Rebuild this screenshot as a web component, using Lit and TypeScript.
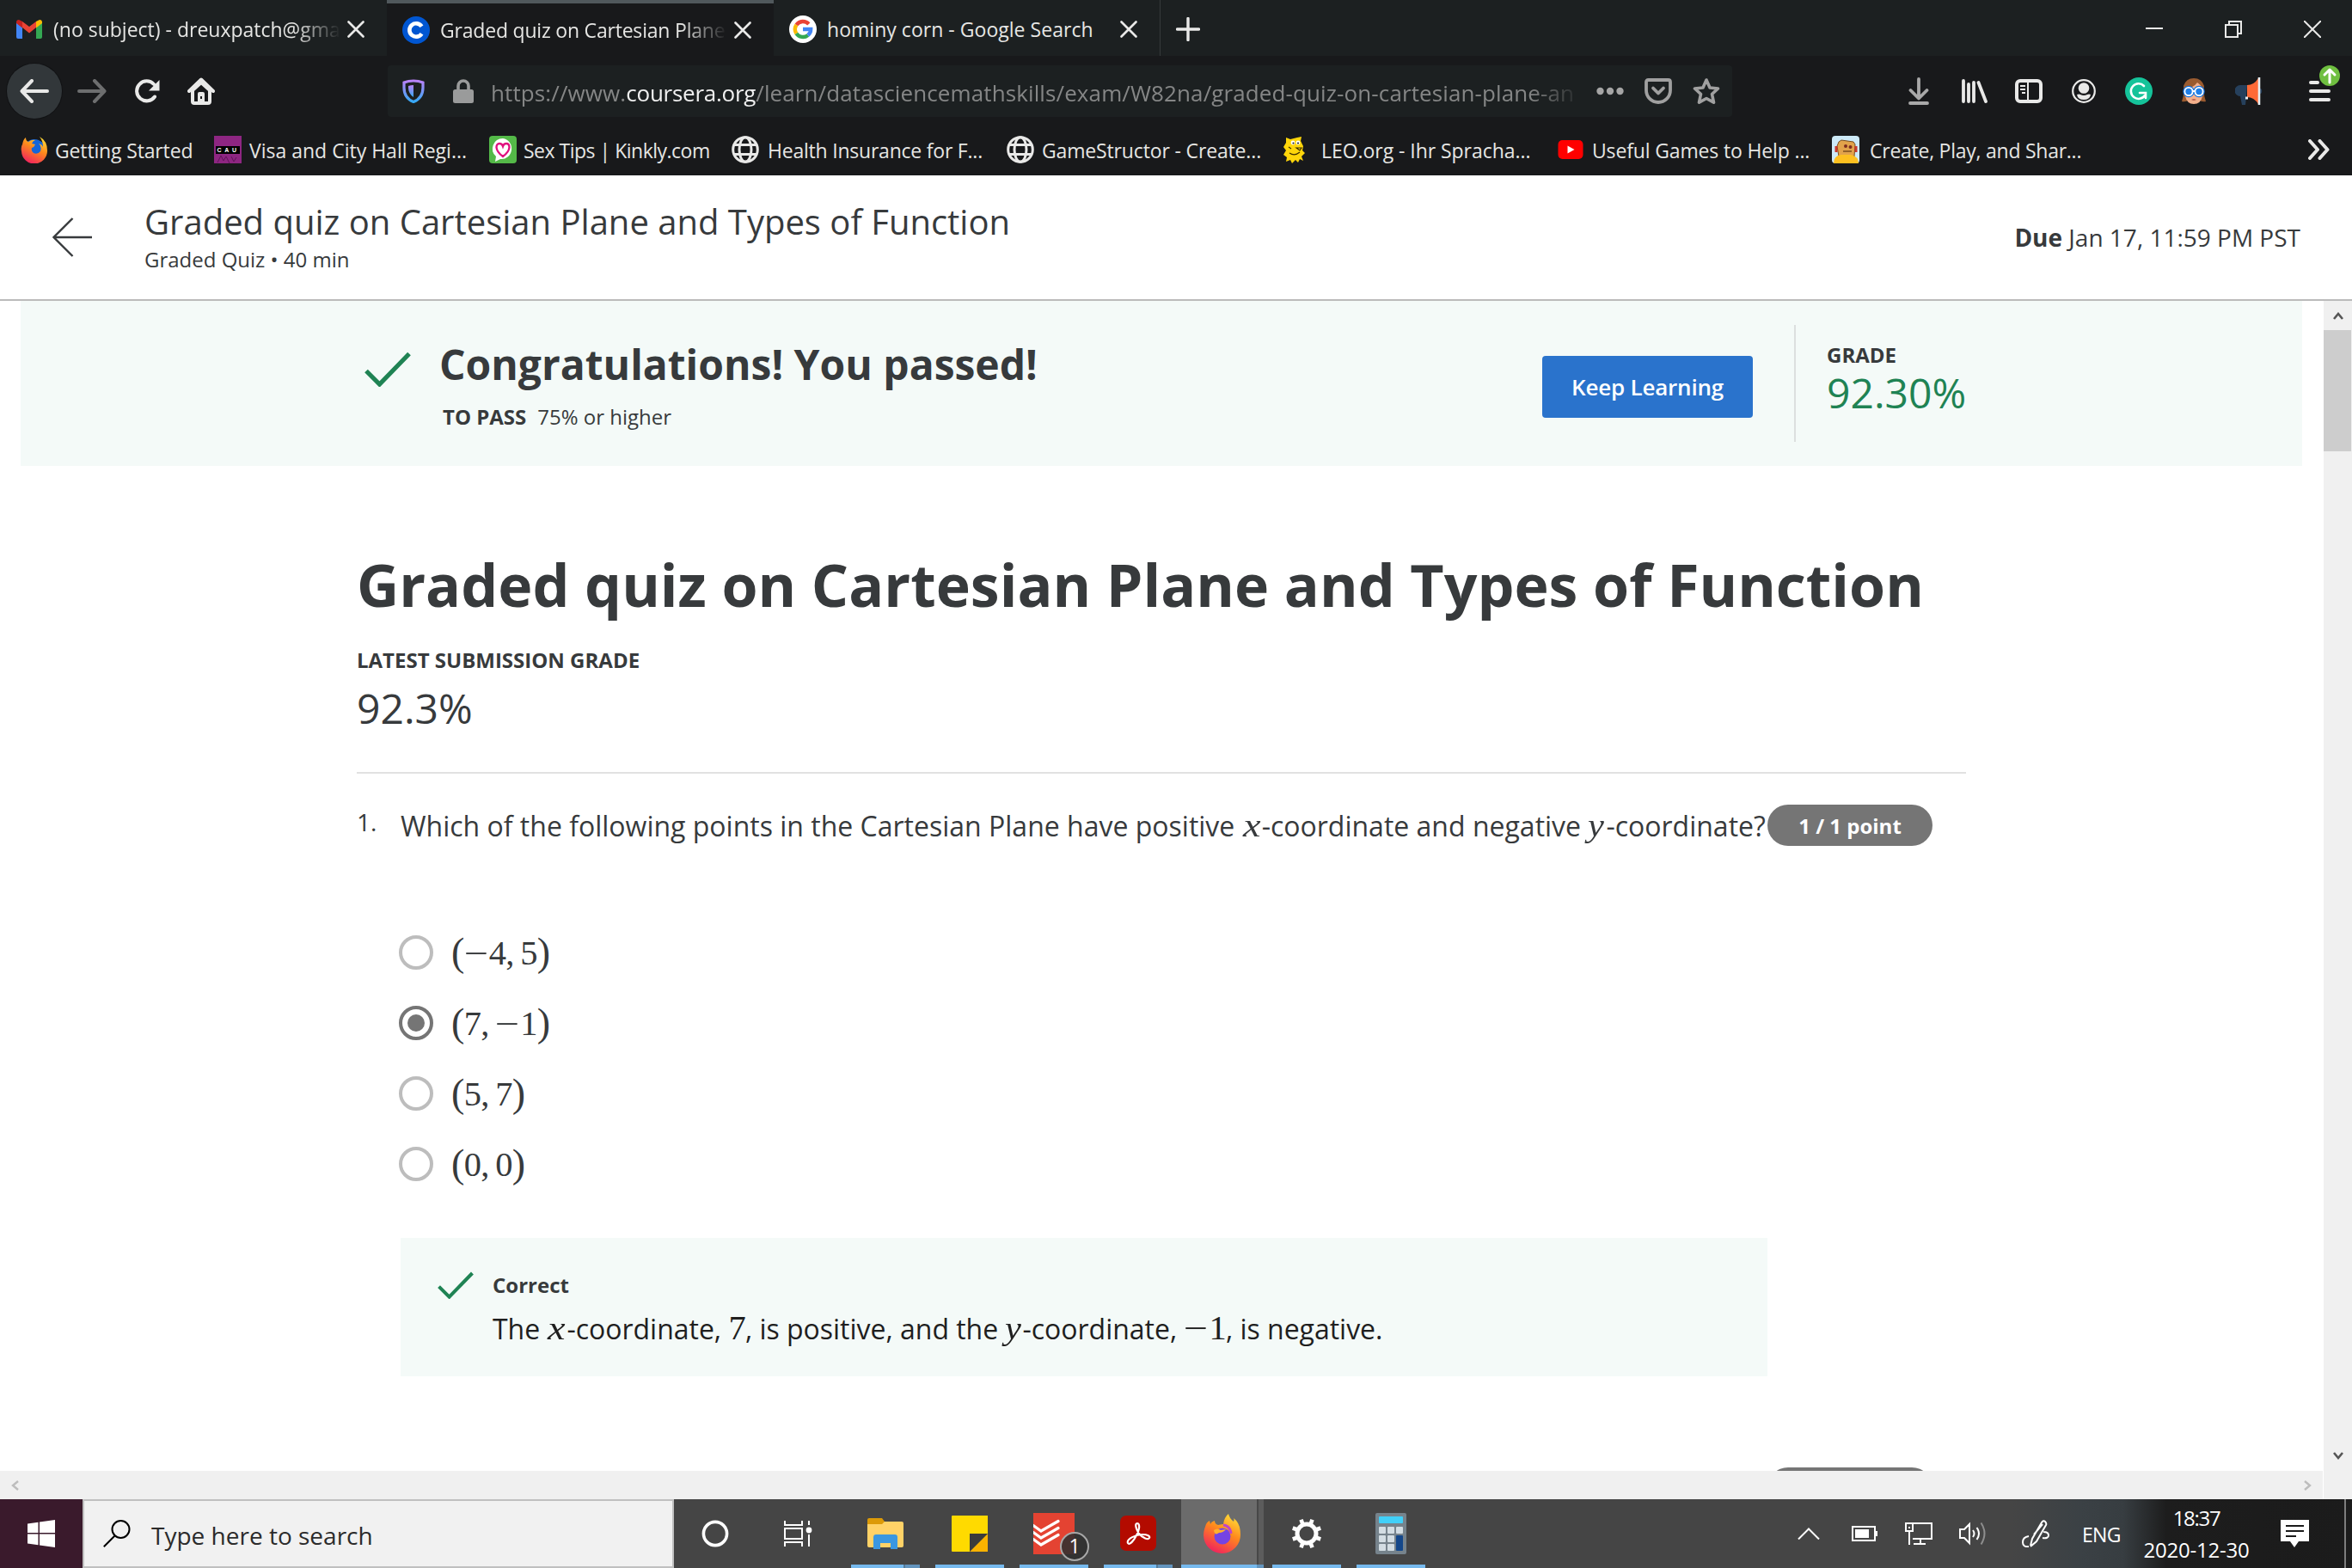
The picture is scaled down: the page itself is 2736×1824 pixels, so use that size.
import { LitElement, html, css, svg } from "lit";
import { customElement } from "lit/decorators.js";
import { classMap } from "lit/directives/class-map.js";

const icon = (w: number, h: number, body: unknown) =>
  html`<svg class="icon" width=${w} height=${h} viewBox="0 0 ${w} ${h}" fill="none">${body}</svg>`;

const LIGHT = "#e9e9e8";

/* ---------- browser chrome icons ---------- */
const gmail = icon(30, 22, svg`
  <path d="M0 3v17q0 2 2 2h5V9z" fill="#4285f4"/><path d="M30 3v17q0 2-2 2h-5V9z" fill="#34a853"/>
  <path d="M7 9V2l8 6 8-6v7l-8 6.500z" fill="#ea4335"/><path d="M0 3q0-3 3-3l4 2v7.500L0 4z" fill="#c5221f"/>
  <path d="M30 3q0-3-3-3l-4 2v7.500L30 4z" fill="#fbbc04"/>`);
const coursera = icon(32, 32, svg`<circle cx="16" cy="16" r="16" fill="#0056d2"/>
  <path d="M22.500 11.800A7.700 7.700 0 1 0 22.500 20.200" stroke="#fff" stroke-width="4.600"/>`);
const googleG = icon(32, 32, svg`<circle cx="16" cy="16" r="16" fill="#fff"/><g stroke-width="4.400">
  <path d="M22.800 10A9.200 9.200 0 0 0 8.400 11" stroke="#ea4335"/><path d="M8.400 11A9.200 9.200 0 0 0 8.400 21" stroke="#fbbc05"/>
  <path d="M8.400 21A9.200 9.200 0 0 0 21.800 23" stroke="#34a853"/><path d="M21.800 23A9.200 9.200 0 0 0 25.200 16H16" stroke="#4285f4"/></g>`);
const tabClose = icon(20, 20, svg`<path d="M1.500 1.500l17 17M18.500 1.500l-17 17" stroke=${LIGHT} stroke-width="2.600" stroke-linecap="round"/>`);
const plus = icon(28, 28, svg`<path d="M14 1.500v25M1.500 14h25" stroke=${LIGHT} stroke-width="3.400" stroke-linecap="round"/>`);
const winMin = icon(20, 20, svg`<path d="M0 9h20" stroke=${LIGHT} stroke-width="2"/>`);
const winRestore = icon(20, 20, svg`<path d="M1 5h14v14H1zM5 5V1h14v14h-4" stroke=${LIGHT} stroke-width="2"/>`);
const winClose = icon(20, 20, svg`<path d="M0 0l20 20M20 0L0 20" stroke=${LIGHT} stroke-width="2"/>`);
const back = icon(34, 28, svg`<path d="M32 14H3M14 2L2.500 14 14 26" stroke=${LIGHT} stroke-width="4" stroke-linecap="round" stroke-linejoin="round"/>`);
const forward = icon(34, 28, svg`<path d="M2 14h29M20 2l11.500 12L20 26" stroke="#6d6e6f" stroke-width="4" stroke-linecap="round" stroke-linejoin="round"/>`);
const reload = icon(30, 28, svg`<path d="M24 20.500A11.500 11.500 0 1 1 23 6" stroke=${LIGHT} stroke-width="4" stroke-linecap="round"/><path d="M29.500 1v12.500H17z" fill=${LIGHT}/>`);
const home = icon(32, 32, svg`<path d="M2 16L16 2.500 30 16" stroke=${LIGHT} stroke-width="4" stroke-linecap="round" stroke-linejoin="round"/>
  <path d="M6 15v13q0 2 2 2h16q2 0 2-2V15L16 6z" stroke=${LIGHT} stroke-width="4"/><path d="M12 30V19q0-2 2-2h4q2 0 2 2v11z" fill=${LIGHT}/><path d="M16 22v3" stroke="#18191b" stroke-width="2"/>`);
const shield = icon(26, 28, svg`<defs><linearGradient id="sh" x1="0" y1="0" x2="0" y2="1"><stop offset="0" stop-color="#b982f8"/><stop offset="1" stop-color="#35a9f5"/></linearGradient></defs>
  <path d="M13 2q6 0 11 2v6q0 12-11 16.500Q2 22 2 10V4q5-2 11-2z" stroke="url(#sh)" stroke-width="3.200"/><path d="M13 7v14q-6-4-6-11V8q3-1 6-1z" fill="url(#sh)"/>`);
const lock = icon(24, 28, svg`<path d="M6 13V8a6 6 0 0 1 12 0v5" stroke="#9a9b9b" stroke-width="3.600"/><rect y="12" width="24" height="16" rx="2.500" fill="#9a9b9b"/>`);
const dots = icon(32, 10, svg`<g fill="#a5a5a5"><circle cx="4.500" cy="5" r="4.200"/><circle cx="16" cy="5" r="4.200"/><circle cx="27.500" cy="5" r="4.200"/></g>`);
const pocket = icon(32, 30, svg`<path d="M4.500 2h23Q30 2 30 4.500V14a14 14 0 0 1-28 0V4.500Q2 2 4.500 2z" stroke="#a0a0a0" stroke-width="3.800"/><path d="M10 11.500l6 6 6-6" stroke="#a0a0a0" stroke-width="3.800" stroke-linecap="round" stroke-linejoin="round"/>`);
const star = icon(32, 32, svg`<path d="M16 3l4 9 9.500 1-7 6.500 2 9.700L16 24.500 7.500 29.200l2-9.700-7-6.500 9.500-1z" stroke="#a0a0a0" stroke-width="3.600" stroke-linejoin="round"/>`);
const download = icon(24, 32, svg`<path d="M12 2v22M2.500 15L12 24.500 21.500 15M2 30h20" stroke="#a9a9a9" stroke-width="3.800" stroke-linecap="round" stroke-linejoin="round"/>`);
const library = icon(30, 28, svg`<path d="M2 2v24M8 6v20M14 4v22M19.500 4L28 26" stroke=${LIGHT} stroke-width="3.800" stroke-linecap="round"/>`);
const sidebar = icon(32, 28, svg`<rect x="2" y="2" width="28" height="24" rx="4" stroke=${LIGHT} stroke-width="4"/><path d="M15 2v24" stroke=${LIGHT} stroke-width="2"/><path d="M6 8h6M6 12h6M8 16h4" stroke=${LIGHT} stroke-width="2.200"/>`);
const account = icon(28, 28, svg`<circle cx="14" cy="14" r="12.800" stroke=${LIGHT} stroke-width="2.200"/><circle cx="14" cy="10.500" r="6.300" fill=${LIGHT}/><path d="M6 18q3-1 4 0 4 2 8 0 2-1 4 0-1 6-8 6t-8-6z" fill=${LIGHT}/>`);
const grammarly = icon(32, 32, svg`<circle cx="16" cy="16" r="16" fill="#15c39a"/><path d="M22 10A8.800 8.800 0 1 0 23 21M17 18h7v6" stroke="#fff" stroke-width="2.600" stroke-linecap="round"/>`);
const face = icon(28, 32, svg`<path d="M0 28Q3 20 2 10 5 1 14 1t12 9q-1 10 2 18-5 1-8-2H8q-3 3-8 2z" fill="#9a5b30"/><path d="M4 13Q14 12 18 6q5 3 6 8v8q-2 9-10 9T4 22z" fill="#f3b08c"/>
  <g stroke="#1173e0" stroke-width="5"><circle cx="8" cy="16.500" r="4.200"/><circle cx="20" cy="16.500" r="4.200"/></g><g stroke="#fff" stroke-width="1.800" fill="#1f7fe8"><circle cx="8" cy="16.500" r="4.600"/><circle cx="20" cy="16.500" r="4.600"/></g><path d="M12.500 16h3" stroke="#fff" stroke-width="2"/><path d="M11 26q3-1.500 6 0-3 1.500-6 0z" fill="#a3483c"/>`);
const horn = icon(32, 32, svg`<path d="M14 9H6a6 6 0 0 0 0 13l2 10h4l1-9z" fill="#26405c"/><circle cx="28" cy="16" r="3.200" fill="#26405c"/><path d="M14 9q8 0 13-8v30q-5-8-13-8z" fill="#ff6a37"/><path d="M28 0v32" stroke="#e8eef2" stroke-width="2.600"/><path d="M12 24h3" stroke="#e8eef2" stroke-width="3"/>`);
const menu = icon(38, 46, svg`<path d="M2 20h8M2 30h21M2 40h21" stroke=${LIGHT} stroke-width="4" stroke-linecap="round"/><circle cx="24" cy="12" r="12" fill="#6fbf40"/><path d="M24 20V5M18 11l6-6 6 6" stroke="#fff" stroke-width="3" stroke-linecap="round" stroke-linejoin="round"/>`);
const chevrons = icon(26, 24, svg`<path d="M2 2l9 10-9 10M13.500 2l9 10-9 10" stroke=${LIGHT} stroke-width="4" stroke-linecap="round" stroke-linejoin="round"/>`);

/* ---------- bookmark favicons ---------- */
const fxPaths = (id: string) => svg`<defs><linearGradient id=${id} x1=".8" y1="0" x2=".3" y2="1"><stop offset="0" stop-color="#ffe13a"/><stop offset=".45" stop-color="#ff8a1c"/><stop offset="1" stop-color="#f0205f"/></linearGradient></defs>`;
const foxOld = icon(32, 32, svg`${fxPaths("f1")}<circle cx="16" cy="17" r="13" fill="#1565d8"/>
  <path d="M2 10Q3 4 6 2q0 4 3 5 4-3 8-2-3 1-4 4l4 1q-1 3-4 4-1 4 2 6 5 2 8-2 2-6-2-9 4 1 5 4 0-7-4-12 9 5 9 16a15 15 0 0 1-30 1q-1-5 1-8z" fill="url(#f1)"/>`);
const cau = icon(32, 32, svg`<rect width="32" height="32" fill="#8e2682"/><rect x="2" y="12" width="28" height="9" fill="#000"/><text x="3.500" y="19" class="cau" fill="#fff">C A U</text><path d="M4 31l4-8 3 6 3-5 4 8M20 24l3 6 3-5" stroke="#5f1558" stroke-width="1"/>`);
const kinkly = icon(32, 32, svg`<rect width="32" height="32" rx="4" fill="#54b948"/><path d="M16 3a11.500 12 0 1 1-3 24l-6 3 1-6A12 12 0 0 1 16 3z" fill="#fff"/><path d="M16 24Q9 19 8.500 13.500 8.500 9 12 9q3 0 4 3 1-3 4-3 3.500 0 3.500 4.500Q23 19 16 24z" stroke="#e0117e" stroke-width="2.400"/>`);
const globe = icon(32, 32, svg`<g stroke=${LIGHT} stroke-width="3"><circle cx="16" cy="16" r="14.300"/><ellipse cx="16" cy="16" rx="7" ry="14.300"/><path d="M3 10.500h26M3 21.500h26"/></g>`);
const leo = icon(32, 32, svg`<path d="M5 2l5 2 8-2 5-1-1 5 3 6-1 5 3 3-4 4 2 5-4-2-2 4-3-3-4 4-2-4-5 2 1-5-4-3 3-5-3-4 3-5z" fill="#ffd60a"/><circle cx="13" cy="8" r="2.400" fill="#fff"/><circle cx="19" cy="8" r="2.400" fill="#fff"/><circle cx="13.500" cy="8.500" r="1.100" fill="#222"/><circle cx="19" cy="8.500" r="1.100" fill="#222"/><path d="M17 14h6l-2 3zM9 20q6 4 12-1M8 13l3 2" stroke="#3a2c00" stroke-width="1.200"/>`);
const youtube = icon(32, 32, svg`<rect x="1.500" y="5" width="29" height="22" rx="5" fill="#f00"/><path d="M12.500 11.500l8 4.500-8 4.500z" fill="#fff"/>`);
const robot = icon(32, 32, svg`<rect width="32" height="32" rx="4" fill="#cdeaf8"/><path d="M8 7l3-2 14 2 2 3-1 14H8L6 12z" fill="#e2a34b" stroke="#7a4d1c" stroke-width="1"/><path d="M2 32q0-9 9-10h11q9 2 9 10z" fill="#fdc020"/><path d="M5 12v7M28 12v7" stroke="#c8382c" stroke-width="3"/><circle cx="16" cy="12" r="2" fill="#7d2c20"/><circle cx="21.500" cy="13" r="2" fill="#7d2c20"/><path d="M13 18h10" stroke="#7a4d1c" stroke-width="1.500"/>`);

/* ---------- page icons ---------- */
const pageBack = icon(46, 46, svg`<path d="M46 23H1.500M23.500 1L1.500 23l22 22" stroke="#373a3c" stroke-width="2.400"/>`);
const check = (w: number, h: number) => html`<svg class="icon" width=${w} height=${h} viewBox="0 0 54 41" fill="none"><path d="M2 22.500L17.500 38 52 2.500" stroke="#1f8354" stroke-width="5.200"/></svg>`;
const scrollUp = icon(12, 9, svg`<path d="M1 8l5-6 5 6" stroke="#555" stroke-width="2.600"/>`);
const scrollDown = icon(12, 9, svg`<path d="M1 1l5 6 5-6" stroke="#555" stroke-width="2.600"/>`);
const scrollLeft = icon(9, 12, svg`<path d="M8 1L2 6l6 5" stroke="#bdbdbd" stroke-width="2.400"/>`);
const scrollRight = icon(9, 12, svg`<path d="M1 1l6 5-6 5" stroke="#bdbdbd" stroke-width="2.400"/>`);

/* ---------- taskbar icons ---------- */
const windows = icon(32, 32, svg`<path d="M0 4.500L12.500 2.700V15H0zM14 2.500L32 0v15H14zM0 16.500h12.500v12.700L0 27.500zM14 16.500h18V32L14 29.500z" fill="#fff"/>`);
const magnifier = icon(32, 32, svg`<circle cx="20.500" cy="11" r="10" stroke="#000" stroke-width="2"/><path d="M13.500 18.500L.8 31.200" stroke="#000" stroke-width="2"/>`);
const cortana = icon(32, 32, svg`<circle cx="16" cy="16" r="13.600" stroke="#fff" stroke-width="3.600"/>`);
const taskView = icon(34, 32, svg`<path d="M2 1v5h20V1M2 31v-5h20v5M2 10h20v12H2zM30 1v5M30 17v14" stroke="#fff" stroke-width="2"/><circle cx="30" cy="12" r="3.400" fill="#fff"/>`);
const explorer = icon(42, 36, svg`<path d="M0 2q0-2 2-2h15l3 4v6H0z" fill="#dc9a08"/><path d="M0 7h17l3-3h20q2 0 2 2v26q0 2-2 2H2q-2 0-2-2z" fill="#ffd267"/><path d="M7 36V22q0-3 3-3h22q3 0 3 3v14h-8v-7H15v7z" fill="#3a97e0"/>`);
const sticky = icon(42, 42, svg`<path d="M0 1q0-1 1-1h41v21L21 42H1q-1 0-1-1z" fill="#ffda00"/><path d="M42 21v21H21z" fill="#f9b200"/><path d="M21 21h21L21 42z" fill="#3b3b3b"/>`);
const todoist = icon(48, 48, svg`<rect width="48" height="48" fill="#e44332"/><path d="M0 14.500l9 6.500 20-11.500M0 22.500l9 6.500 20-11.500M0 30.500l9 6.500 20-11.500" stroke="#fff" stroke-width="3.200" stroke-linecap="round"/>`);
const acrobat = icon(42, 42, svg`<rect width="42" height="41" rx="7" fill="#b30b00"/><path d="M9 32c-2-5 10-10 17-10 6 0 9 2 8 4-1 3-8 0-12-5-4-6-5-12-2-12s3 7-1 14c-3 6-8 12-10 9z" stroke="#fff" stroke-width="2.200"/>`);
const firefox = icon(44, 46, svg`${fxPaths("f2")}<path d="M2 15Q3 10 7 8l1 4q1-3 5-4 0 4 4 5 5-1 6-1 1-8 6-12 1 5 6 9 1-2 0-4 8 6 8 19a21 21 0 0 1-43 1q0-5 2-10z" fill="url(#f2)"/><circle cx="22" cy="26" r="9.500" fill="#7543e3"/><path d="M12 19q4-3 8 0l6-1q-3 4-8 4-5 4-6-3z" fill="#ffb02e"/><path d="M23 13q8 1 9 10" stroke="#c044c8" stroke-width="3"/>`);
const gear = icon(36, 36, svg`<circle cx="18" cy="18" r="11" stroke="#fff" stroke-width="5"/><path d="M11.500 1.800l2 5.500M24.500 1.800l-2 5.500M11.500 34.200l2-5.500M24.500 34.200l-2-5.500M1.800 11.500l5.500 2M1.800 24.500l5.500-2M34.200 11.500l-5.500 2M34.200 24.500l-5.500-2" stroke="#fff" stroke-width="4.600"/>`);
const calculator = icon(36, 48, svg`<rect width="36" height="48" rx="2" fill="#76838c"/><rect x="4" y="4" width="28" height="8" rx="1" fill="#41d0f8"/><g fill="#d3dde3"><rect x="4" y="16" width="8" height="8" rx="1"/><rect x="14" y="16" width="8" height="8" rx="1"/><rect x="24" y="16" width="8" height="8" rx="1"/><rect x="4" y="26" width="8" height="8" rx="1"/><rect x="14" y="26" width="8" height="8" rx="1"/><rect x="4" y="36" width="8" height="8" rx="1"/><rect x="14" y="36" width="8" height="8" rx="1"/></g><rect x="24" y="26" width="8" height="18" rx="1" fill="#14478a"/>`);
const caret = icon(26, 14, svg`<path d="M1 13.500L13 1.500l12 12" stroke="#fff" stroke-width="2"/>`);
const battery = icon(30, 18, svg`<path d="M1 1h26v16H1z" stroke="#fff" stroke-width="2"/><path d="M4 4h16v10H4zM28 6h2v6h-2z" fill="#fff"/>`);
const network = icon(32, 28, svg`<path d="M9 2h22v18H9M18 20v6M10 26h14M1 2h8v9H1zM5 11v16M5 6v2" stroke="#fff" stroke-width="2"/>`);
const speaker = icon(34, 28, svg`<path d="M1 9h5l6-6v22l-6-6H1z" stroke="#fff" stroke-width="2"/><path d="M16 10q3 4 0 8M20.500 7q5 7 0 14" stroke="#fff" stroke-width="2"/><path d="M25.500 1.500q8 12 0 25" stroke="#8e8e8e" stroke-width="2"/>`);
const pen = icon(32, 32, svg`<path d="M10 30l2-8L23 3q2-3 4-1t1 4L17 25l-7 6M24 5L14 17M8 19q-7 1-7 7t7 5M25 14q6 0 6 4t-7 3" stroke="#fff" stroke-width="2"/>`);
const notice = icon(33, 32, svg`<path d="M0 0h33v25H21l-5 7-5-7H0z" fill="#fff"/><path d="M6 7h21M6 13h21M6 19h12" stroke="#1b1b1b" stroke-width="2"/>`);

const tabs = [
  { art: gmail, title: "(no subject) - dreuxpatch@gma", kind: "mail" },
  { art: coursera, title: "Graded quiz on Cartesian Plane", kind: "active" },
  { art: googleG, title: "hominy corn - Google Search", kind: "search" },
];
/* width: distance to the next bookmark; gap: icon to label; ls: label tracking */
const bookmarks = [
  { art: foxOld, label: "Getting Started", width: 225, gap: 8, ls: -0.15 },
  { art: cau, label: "Visa and City Hall Regi...", width: 320, gap: 9, ls: 0 },
  { art: kinkly, label: "Sex Tips | Kinkly.com", width: 282, gap: 8, ls: -0.5 },
  { art: globe, label: "Health Insurance for F...", width: 320, gap: 10, ls: -0.22 },
  { art: globe, label: "GameStructor - Create...", width: 320, gap: 9, ls: -0.15 },
  { art: leo, label: "LEO.org - Ihr Spracha...", width: 320, gap: 14, ls: -0.05 },
  { art: youtube, label: "Useful Games to Help ...", width: 320, gap: 9, ls: -0.15 },
  { art: robot, label: "Create, Play, and Shar...", width: 320, gap: 12, ls: -0.25 },
];
const minus = html`<span class="minus">−</span>`;
const comma = html`<span class="comma">,</span>`;
const options = [
  { value: html`${minus}4${comma}5`, picked: false },
  { value: html`7${comma}${minus}1`, picked: true },
  { value: html`5${comma}7`, picked: false },
  { value: html`0${comma}0`, picked: false },
];
const apps = [
  { art: explorer, kind: "stack" },
  { art: sticky, kind: "single" },
  { art: html`<span class="badged">${todoist}<span class="badge">1</span></span>`, kind: "single" },
  { art: acrobat, kind: "stack" },
  { art: firefox, kind: "front" },
  { art: gear, kind: "single" },
  { art: calculator, kind: "single" },
];

@customElement("browser-chrome")
class BrowserChrome extends LitElement {
  static styles = css`
    :host { display: block; height: 204px; background: #18191b; color: #e6e6e4; font: 23px "Open Sans", sans-serif; white-space: nowrap; }
    .icon { display: block; flex: none; }
    .tabs { display: flex; height: 65px; background: #1c2021; }
    .tab { box-sizing: border-box; display: flex; align-items: center; width: 450px; height: 65px; padding: 3px 26px 0 18px; }
    .tab .title { flex: none; width: 334px; margin: 0 auto 0 12px; line-height: 40px; letter-spacing: -0.2px;
      -webkit-mask-image: linear-gradient(90deg, #000 84%, transparent 100%); mask-image: linear-gradient(90deg, #000 84%, transparent 100%); }
    .tab.mail { padding-left: 19px; }
    .tab.mail .title { margin-left: 13px; letter-spacing: 0; }
    .tab.active { background: #18191b; padding-top: 0; border-top: 4px solid #50585c; }
    .tab.search { border-right: 1px solid #363a3b; }
    .tab.search .title { letter-spacing: 0.03px; -webkit-mask-image: none; mask-image: none; }
    .new { display: flex; align-items: center; padding: 2px 0 0 18px; }
    .window { display: grid; grid-template-columns: 92px 92px 56px; align-items: center; margin-left: auto; padding-top: 2px; }
    .bar { display: flex; align-items: center; height: 82px; }
    .nav { display: grid; grid-template-columns: 82px 66px 62px 233px; align-items: center; padding-left: 8px; }
    .round { display: flex; align-items: center; justify-content: center; width: 64px; height: 64px; border-radius: 50%; background: #32373a; box-shadow: 0 0 0 1px #111214; }
    .url { box-sizing: border-box; display: flex; align-items: center; width: 1564px; height: 60px; padding: 0 14px 0 17px; border-radius: 4px; background: #1c2021; }
    .lock { margin: 0 20px 0 33px; }
    .address { flex: none; width: 1271px; margin-right: 15px; padding-top: 4px; line-height: 44px; font-size: 26px; color: #858686; letter-spacing: 0.11px;
      -webkit-mask-image: linear-gradient(90deg, #000 95%, transparent 100%); mask-image: linear-gradient(90deg, #000 95%, transparent 100%); }
    .host { color: #f0f0f0; letter-spacing: -0.25px; }
    .page-actions { display: flex; align-items: center; gap: 24px; }
    .tools { display: grid; grid-template-columns: 62px 62px 66px 62px 66px 62px 86px 50px; align-items: center; margin-left: auto; }
    .tools .icon:last-child { margin-top: -14px; }
    .marks { box-sizing: border-box; display: flex; align-items: center; height: 57px; padding: 0 25px 3px 24px; }
    .mark { display: flex; align-items: center; }
    .mark .label { padding-top: 2px; line-height: 32px; }
    .more { margin-left: auto; }
    .cau { font: bold 7px "Liberation Sans", sans-serif; letter-spacing: 1px; }
  `;
  render() {
    return html`
      <div class="tabs">
        ${tabs.map((t) => html`<div class="tab ${t.kind}">${t.art}<span class="title">${t.title}</span>${tabClose}</div>`)}
        <div class="new">${plus}</div>
        <div class="window">${winMin}${winRestore}${winClose}</div>
      </div>
      <div class="bar">
        <div class="nav"><span class="round">${back}</span>${forward}${reload}${home}</div>
        <div class="url">
          ${shield}<span class="lock">${lock}</span>
          <div class="address">https://www.<span class="host">coursera.org</span>/learn/datasciencemathskills/exam/W82na/graded-quiz-on-cartesian-plane-an</div>
          <div class="page-actions">${dots}${pocket}${star}</div>
        </div>
        <div class="tools">${download}${library}${sidebar}${account}${grammarly}${face}${horn}${menu}</div>
      </div>
      <div class="marks">
        ${bookmarks.map((b) => html`<div class="mark" style="width:${b.width}px;gap:${b.gap}px">${b.art}<span class="label" style="letter-spacing:${b.ls}px">${b.label}</span></div>`)}
        <div class="more">${chevrons}</div>
      </div>`;
  }
}

@customElement("quiz-page")
class QuizPage extends LitElement {
  static styles = css`
    :host { display: flex; flex-direction: column; height: 1540px; background: #fff; color: #373a3c; font: 24px "Open Sans", sans-serif; white-space: nowrap; }
    .icon { display: block; flex: none; }
    .header { box-sizing: border-box; display: flex; align-items: center; height: 146px; padding: 0 60px 0 61px; border-bottom: 2px solid #bbb; }
    .titles { margin-left: 61px; }
    .name { font-size: 40px; line-height: 48px; padding-top: 1px; margin-bottom: 2px; }
    .meta { line-height: 36px; }
    .due { margin-left: auto; font-size: 28px; line-height: 40px; }
    .frame { display: grid; flex: 1; min-height: 0; grid-template: minmax(0, 1fr) 33px / minmax(0, 1fr) 33px; }
    .view { overflow: hidden; }
    .banner { box-sizing: border-box; display: flex; height: 192px; width: 2654px; margin-left: 24px; padding: 28px 0 28px 400px; background: #f4faf8; }
    .banner .icon { margin-top: 31px; }
    .result { width: 1283px; margin: 16px 0 0 33px; }
    .congrats { font-size: 48px; line-height: 60px; font-weight: 700; margin: 0 0 13px; }
    .pass { display: flex; gap: 13px; padding-left: 4px; line-height: 36px; }
    .button { box-sizing: border-box; width: 245px; height: 72px; margin: 36px 48px 0 0; border-radius: 4px; background: #2a73cc; color: #fff; text-align: center; font-size: 26px; line-height: 72px; font-weight: 600; letter-spacing: -0.2px; }
    .grade { padding: 19px 0 0 36px; border-left: 2px solid #dcdfdf; font-weight: 700; line-height: 32px; }
    .score { color: #1f8354; font-size: 48px; line-height: 56px; font-weight: 400; }
    .quiz { width: 1872px; margin: 96px 0 0 415px; }
    h1 { margin: 0; font-size: 68px; line-height: 84px; font-weight: 700; }
    .caption { margin-top: 28px; line-height: 36px; font-weight: 700; }
    .percent { margin-top: 8px; font-size: 48px; line-height: 60px; }
    .rule { height: 2px; margin: 44px 0 36px; background: #e1e1e1; }
    .question { display: grid; grid-template-columns: 51px 1590px 192px; }
    .number { font-size: 28px; line-height: 40px; }
    .prompt { font-size: 32px; line-height: 50px; height: 48px; }
    .pill { height: 48px; border-radius: 24px; background: #757575; color: #fff; text-align: center; font-size: 24px; line-height: 49px; font-weight: 700; }
    .math { display: inline-block; font: 40.500px/30px "Liberation Serif", serif; }
    .x, .y { font-size: 37px; font-style: italic; transform-origin: left; }
    .x { width: 17px; margin: 0 5px 0 1px; transform: scaleX(1.25); }
    .y { width: 17px; margin-right: 4px; transform: scaleX(1.15); }
    .options { margin: 83px 0 0 49px; }
    .option { display: flex; align-items: center; gap: 21px; height: 82px; }
    .radio { box-sizing: border-box; width: 40px; height: 40px; border: 4px solid #bdbdbd; border-radius: 50%; }
    .picked { padding: 6px; border-color: #757575; background: #757575 content-box; }
    .value { padding-top: 2px; font: 40.500px/60px "Liberation Serif", serif; letter-spacing: -0.700px; color: #373a3c; }
    .paren { font-size: 46px; line-height: 0; vertical-align: -1px; }
    .minus { display: inline-block; width: 22px; margin: 0 4px 0 3px; font-size: 38.700px; transform: scaleX(1.3); }
    .comma { display: inline-block; width: 17px; }
    .feedback { box-sizing: border-box; display: flex; width: 1590px; height: 161px; margin: 45px 0 106px 51px; padding: 39px 0 0 43px; background: #f4faf8; }
    .verdict { margin-left: 22px; }
    .correct { font-weight: 700; line-height: 32px; }
    .reason { margin-top: 11px; height: 48px; font-size: 32px; line-height: 48px; letter-spacing: -0.020px; color: #1f1f1f; }
    .reason .math { letter-spacing: -0.800px; }
    .reason .y { margin-right: 3px; }
    .vscroll { grid-row: 1 / 3; grid-column: 2; display: flex; flex-direction: column; justify-content: space-between; background: #f0f0f0; }
    .vscroll .top { height: 175px; }
    .cap { display: flex; align-items: center; justify-content: center; height: 34px; }
    .thumb { width: 32px; height: 141px; background: #cdcdcd; }
    .vscroll .bottom { height: 68px; display: flex; justify-content: center; padding-top: 13px; box-sizing: border-box; }
    .hscroll { display: flex; align-items: center; justify-content: space-between; margin-right: 1px; padding: 0 13px; background: #f0f0f0; }
  `;
  render() {
    const X = html`<span class="math x">x</span>`;
    const Y = html`<span class="math y">y</span>`;
    return html`
      <div class="header">
        ${pageBack}
        <div class="titles"><div class="name">Graded quiz on Cartesian Plane and Types of Function</div><div class="meta">Graded Quiz • 40 min</div></div>
        <div class="due"><b>Due</b> Jan 17, 11:59 PM PST</div>
      </div>
      <div class="frame">
        <div class="view">
          <div class="banner">
            ${check(54, 41)}
            <div class="result"><div class="congrats">Congratulations! You passed!</div><div class="pass"><b>TO PASS</b><span>75% or higher</span></div></div>
            <div class="button">Keep Learning</div>
            <div class="grade">GRADE<div class="score">92.30%</div></div>
          </div>
          <div class="quiz">
            <h1>Graded quiz on Cartesian Plane and Types of Function</h1>
            <div class="caption">LATEST SUBMISSION GRADE</div>
            <div class="percent">92.3%</div>
            <div class="rule"></div>
            <div class="question">
              <span class="number">1.</span>
              <span class="prompt">Which of the following points in the Cartesian Plane have positive ${X}-coordinate and negative ${Y}-coordinate?</span>
              <span class="pill">1 / 1 point</span>
            </div>
            <div class="options">
              ${options.map((o) => html`<div class="option"><span class=${classMap({ radio: true, picked: o.picked })}></span><span class="value"><span class="paren">(</span>${o.value}<span class="paren">)</span></span></div>`)}
            </div>
            <div class="feedback">
              ${check(42, 32)}
              <div class="verdict"><div class="correct">Correct</div>
                <div class="reason">The ${X}-coordinate, <span class="math">7</span>, is positive, and the ${Y}-coordinate, <span class="math">${minus}1</span>, is negative.</div></div>
            </div>
            <div class="question"><span></span><span></span><span class="pill"></span></div>
          </div>
        </div>
        <div class="vscroll"><div class="top"><div class="cap">${scrollUp}</div><div class="thumb"></div></div><div class="bottom">${scrollDown}</div></div>
        <div class="hscroll">${scrollLeft}${scrollRight}</div>
      </div>`;
  }
}

@customElement("task-bar")
class TaskBar extends LitElement {
  static styles = css`
    :host { display: flex; height: 80px; color: #fff; font: 24px "Open Sans", sans-serif; white-space: nowrap;
      background: linear-gradient(90deg, #454545 0, #454545 2340px, #3b4145 2420px, #373d41 2470px, #1d1d1d 2520px, #1b1b1b 100%); }
    .icon { display: block; flex: none; }
    .start { display: flex; align-items: center; justify-content: center; width: 96px; background: #3a1a2c; }
    .search { box-sizing: border-box; display: flex; align-items: center; width: 688px; padding-left: 22px; border: 2px solid #c0c0c0; background: #f1f1f1; color: #2b2b2b; font-size: 28px; }
    .hint { margin: 3px 0 0 24px; line-height: 40px; }
    .cell { display: flex; align-items: center; justify-content: center; width: 96px; }
    .apps { display: flex; margin-left: 5px; }
    .app { box-sizing: border-box; display: grid; grid-template-rows: 76px 4px; justify-items: center; align-items: center; width: 98px; }
    .line { width: 80px; height: 4px; background: #76b9ed; }
    .stack .line { background: linear-gradient(90deg, #76b9ed 61px, #567b98 61px, #567b98 63px, #6394bd 63px); }
    .front { background: linear-gradient(90deg, transparent 1px, #6b6b6b 1px, #6b6b6b 89px, #484848 89px, #484848 91px, #5c5c5c 91px, #5c5c5c 97px, transparent 97px); }
    .front .line { width: 96px; background: linear-gradient(90deg, #76b9ed 88px, #6394bd 88px); }
    .app > .icon, .badged { margin-top: 4px; }
    .badged { position: relative; }
    .badge { box-sizing: border-box; position: absolute; left: 31px; top: 22px; width: 34px; height: 34px; border: 2px solid #a8a8a8; border-radius: 50%; background: rgba(48, 48, 48, 0.880); text-align: center; font-size: 23px; line-height: 29px; }
    .tray { display: grid; grid-template-columns: 63px 62px 63px 73px 70px 71px 124px 36px 74px 9px; align-items: center; margin-left: auto; }
    .lang { padding-top: 1px; font-size: 23px; letter-spacing: -0.700px; }
    .clock { text-align: center; line-height: 37px; letter-spacing: -0.200px; }
    .time { letter-spacing: -1.300px; }
    .edge { width: 2px; height: 80px; background: #7d7d7d; }
  `;
  render() {
    return html`
      <div class="start">${windows}</div>
      <div class="search">${magnifier}<span class="hint">Type here to search</span></div>
      <div class="cell">${cortana}</div>
      <div class="cell">${taskView}</div>
      <div class="apps">${apps.map((a) => html`<div class="app ${a.kind}">${a.art}<span class="line"></span></div>`)}</div>
      <div class="tray">${caret}${battery}${network}${speaker}${pen}<span class="lang">ENG</span>
        <div class="clock"><div class="time">18:37</div><div>2020-12-30</div></div><span></span>${notice}<span class="edge"></span></div>`;
  }
}

@customElement("app-root")
class AppRoot extends LitElement {
  static styles = css`:host { display: flex; flex-direction: column; width: 2736px; height: 1824px; overflow: hidden; }`;
  render() {
    return html`<browser-chrome></browser-chrome><quiz-page></quiz-page><task-bar></task-bar>`;
  }
}
